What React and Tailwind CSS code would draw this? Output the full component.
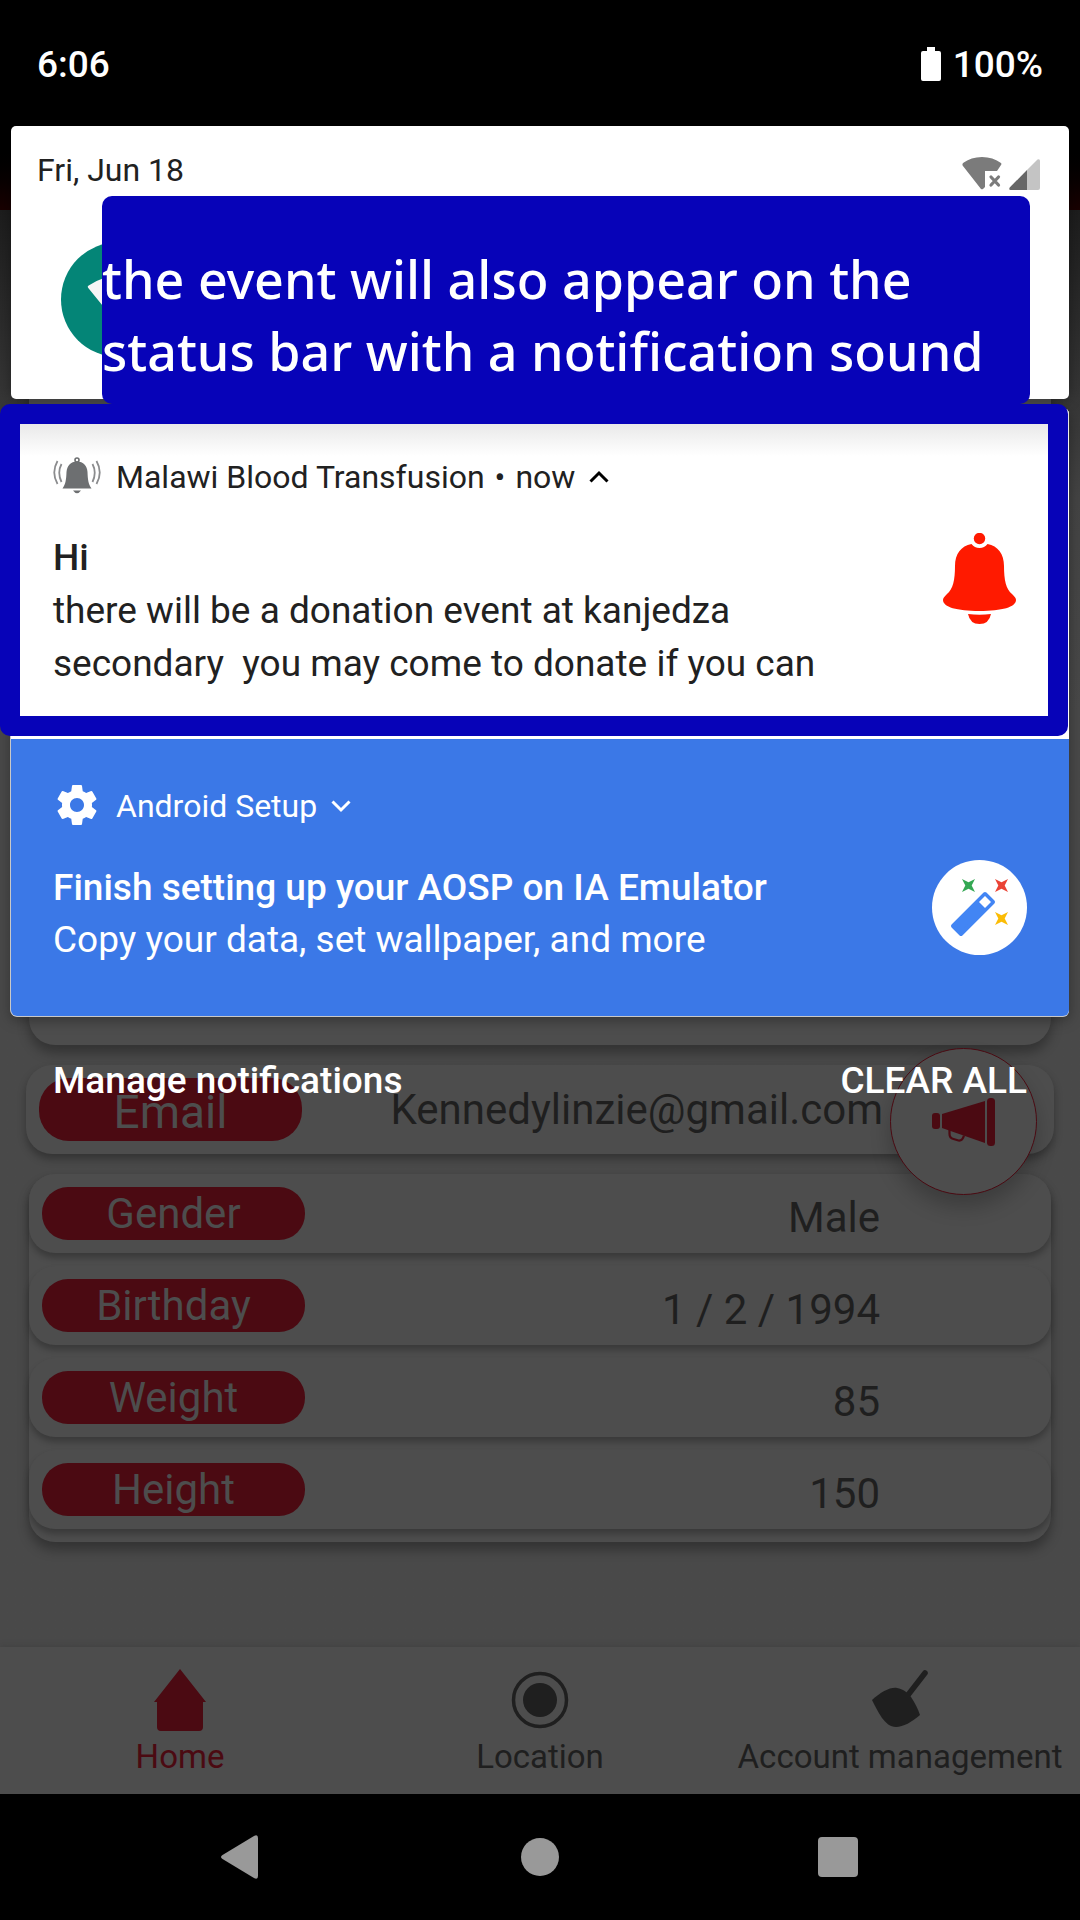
import React from "react";

const details = [
  { label: "Gender", value: "Male" },
  { label: "Birthday", value: "1 / 2 / 1994" },
  { label: "Weight", value: "85" },
  { label: "Height", value: "150" },
];

function HomeIcon() {
  return (
    <svg width="52" height="62" viewBox="0 0 52 62" fill="currentColor" aria-hidden="true">
      <path d="M26 0 52 33h-3v25q0 4-4 4H7q-4 0-4-4V33H0z" />
    </svg>
  );
}

function LocationIcon() {
  return (
    <svg width="58" height="62" viewBox="0 0 58 62" aria-hidden="true">
      <circle cx="29" cy="31" r="26.5" fill="none" stroke="currentColor" strokeWidth="3.5" />
      <circle cx="29" cy="31" r="17" fill="currentColor" />
    </svg>
  );
}

function TrowelIcon() {
  return (
    <svg width="56" height="62" viewBox="0 0 56 62" aria-hidden="true">
      <path d="M53 4 36 26" stroke="currentColor" strokeWidth="5.5" strokeLinecap="round" />
      <path
        d="M0 31C9 23 18 18 25 19c6 1 10 4 14 9 4 6 7 12 9 18-8 7-17 12-24 12-6 0-10-4-14-9C6 43 3 37 0 31z"
        fill="currentColor"
      />
    </svg>
  );
}

function MegaphoneIcon() {
  return (
    <svg width="64" height="48" viewBox="0 0 64 48" fill="currentColor" aria-hidden="true">
      <rect x="0" y="15" width="8" height="16" rx="3" />
      <path d="M10 16 53 3v42L10 30z" />
      <rect x="55" y="0" width="8" height="48" rx="3.5" />
      <path d="M17.500 32v4q0 4 4 5l5 1.500q4 .5 5.500-5" fill="none" stroke="currentColor" strokeWidth="2.2" />
    </svg>
  );
}

function WifiOffIcon() {
  return (
    <svg width="41" height="33" viewBox="0 0 41 33" aria-hidden="true">
      <path
        d="M1 6Q9 0 20 0t19 6q1 1 0 2l-4 6H23v16l-2 2q-1 .7-2 0L.6 8.500Q0 7 1 6z"
        fill="#7b7b7b"
      />
      <path d="m29 20 7.500 8m0-8L29 28" stroke="#7b7b7b" strokeWidth="3.2" strokeLinecap="round" />
    </svg>
  );
}

function SignalIcon() {
  return (
    <svg width="31" height="31" viewBox="0 0 31 31" aria-hidden="true">
      <path d="M18 11 28.500.6Q31-.5 31 2v27q0 2-2 2H18z" fill="#c4c4c4" />
      <path d="M18 11v20H1.500Q-.5 31 .7 28.500z" fill="#666" />
    </svg>
  );
}

function RingingBellIcon() {
  return (
    <svg className="mb-1" width="48" height="37" viewBox="0 0 48 37" aria-hidden="true">
      <circle cx="24" cy="3" r="2" fill="none" stroke="#6d6f71" strokeWidth="1.600" />
      <path d="M24 4.500c6.500 0 10 4.500 10.500 10.500.3 7 .7 12 4 16.500H9.500c3.300-4.500 3.700-9.500 4-16.500C14 9 17.500 4.500 24 4.500z" fill="#6d6f71" />
      <path d="M20 33.500h8q-4 5.500-8 0z" fill="#6d6f71" />
      <path
        d="M8.500 7Q4 15.500 8.500 25M4.500 4Q-2 15.500 4.500 27M39.500 7Q44 15.500 39.500 25M43.500 4Q50 15.500 43.500 27"
        fill="none"
        stroke="#8b8c8e"
        strokeWidth="1.800"
      />
    </svg>
  );
}

function GearIcon() {
  return (
    <svg className="mb-0.5" width="48" height="48" viewBox="0 0 24 24" fill="#fff" aria-hidden="true">
      <path d="M19.430 12.980c.04-.32.07-.64.07-.98s-.03-.66-.07-.98l2.110-1.650c.19-.15.24-.42.12-.64l-2-3.460c-.12-.22-.39-.3-.61-.22l-2.490 1c-.52-.4-1.080-.73-1.690-.98l-.38-2.650C14.460 2.180 14.250 2 14 2h-4c-.25 0-.46.18-.49.42l-.38 2.650c-.61.25-1.170.59-1.690.98l-2.490-1c-.23-.09-.49 0-.61.22l-2 3.460c-.13.22-.07.49.12.64l2.110 1.650c-.04.32-.07.65-.07.98s.03.66.07.98l-2.110 1.650c-.19.15-.24.42-.12.64l2 3.460c.12.22.39.3.61.22l2.490-1c.52.4 1.080.73 1.690.98l.38 2.650c.03.24.24.42.49.42h4c.25 0 .46-.18.49-.42l.38-2.650c.61-.25 1.170-.59 1.690-.98l2.490 1c.23.09.49 0 .61-.22l2-3.460c.12-.22.07-.49-.12-.64l-2.110-1.650zM12 15.500c-1.930 0-3.500-1.570-3.500-3.500s1.570-3.500 3.500-3.500 3.500 1.570 3.500 3.500-1.570 3.500-3.500 3.500z" />
    </svg>
  );
}

function RedBellIcon() {
  return (
    <svg className="mt-px shrink-0" width="95" height="92" viewBox="0 0 95 92" fill="#ff1a00" aria-hidden="true">
      <circle cx="47.500" cy="5.500" r="5.700" />
      <path d="M39.500 11q3 4 8 4t8-4C66 13 72 21 72 33c0 14 2 23 8 28 3 3 4 4 4 6 0 7-14 11-36.500 11S11 74 11 67c0-2 1-3 4-6 6-5 8-14 8-28 0-12 6-20 16.500-22z" />
      <path d="M36 81q11.500 1.500 23 0-2 10-11.500 10T36 81z" />
    </svg>
  );
}

const star = "M-6.500-6.500 0-3.200 6.500-6.500 3.200 0 6.500 6.500 0 3.200-6.500 6.500-3.200 0z";

function WandIcon() {
  return (
    <svg className="-mt-0.5 shrink-0" width="95" height="95" viewBox="0 0 95 95" aria-hidden="true">
      <circle cx="47.500" cy="47.500" r="47.500" fill="#fff" />
      <path d={star} transform="translate(36.500 25.500)" fill="#34a853" />
      <path d={star} transform="translate(69.500 25.500)" fill="#ea4335" />
      <path d={star} transform="translate(69.500 58.500)" fill="#fbbc05" />
      <path
        d="M21 66 53 34l8 8-32 32-8-8z"
        fill="#4285f4"
        stroke="#4285f4"
        strokeWidth="4"
        strokeLinejoin="round"
      />
      <path d="m53 36 6 6-6 6-6-6z" fill="#fff" />
    </svg>
  );
}

function Chevron({ up }) {
  return (
    <svg width="20" height="14" viewBox="0 0 20 14" fill="none" stroke={up ? "#000" : "#fff"} strokeWidth="3" aria-hidden="true">
      <path d={up ? "M1.500 11.500 10 3l8.500 8.500" : "M1.500 2.500 10 11l8.500-8.500"} />
    </svg>
  );
}

function Pill({ children, large }) {
  return (
    <span
      className={
        large
          ? "flex h-[63px] w-[263px] items-center justify-center rounded-[30px] bg-[#4b0a12] pt-1 text-[46px] leading-none text-[#4d4d4d]"
          : "flex h-[53px] w-[263px] items-center justify-center rounded-[26px] bg-[#4b0a12] text-[42px] leading-none text-[#4d4d4d]"
      }
    >
      {children}
    </span>
  );
}

function NavItem({ icon, label, active }) {
  return (
    <a
      href="#"
      className={
        active
          ? "flex flex-col items-center gap-1.5 text-[#4b0a12]"
          : "flex flex-col items-center gap-1.5 text-[#1f1f1f]"
      }
    >
      {icon}
      <span className="text-[33px] leading-10 whitespace-nowrap">{label}</span>
    </a>
  );
}

function AppScreen() {
  return (
    <div className="flex min-h-screen flex-col bg-black">
      <header className="h-[210px] bg-linear-to-b from-black from-60% to-[#190000]" />
      <main className="relative flex-1 bg-linear-to-b from-[#1d1d1d] via-[#444] via-20% to-[#494949] to-35%">
        <section className="mx-[29px] mt-10 h-[795px] rounded-[26px] bg-[#4d4d4d] shadow-[0_8px_12px_rgba(0,0,0,0.3)]" />

        <dl className="mt-5">
          <div className="mx-[26px] flex h-[89px] items-center justify-between rounded-[26px] bg-[#4d4d4d] pr-[171px] pl-[13px] shadow-[0_5px_8px_rgba(0,0,0,0.3)]">
            <dt>
              <Pill large>Email</Pill>
            </dt>
            <dd className="text-[42px] leading-none text-[#1f1f1f]">Kennedylinzie@gmail.com</dd>
          </div>

          <div className="mx-[29px] mt-5 flex flex-col gap-[13px] rounded-[26px] bg-[#4d4d4d] pb-[13px] shadow-[0_8px_12px_rgba(0,0,0,0.3)]">
            {details.map((d) => (
              <div
                key={d.label}
                className="flex h-[79px] items-center justify-between rounded-[26px] bg-[#4d4d4d] pr-[171px] pl-[13px] shadow-[0_5px_6px_rgba(0,0,0,0.25)]"
              >
                <dt>
                  <Pill>{d.label}</Pill>
                </dt>
                <dd className="pt-2 text-[42px] leading-none text-[#1f1f1f]">{d.value}</dd>
              </div>
            ))}
          </div>
        </dl>

        <button
          type="button"
          aria-label="Announcements"
          className="absolute top-[838px] right-[43px] flex size-[147px] items-center justify-center rounded-full border border-[#4b0a12] bg-[#4d4d4d] text-[#4b0a12] shadow-[0_12px_20px_rgba(0,0,0,0.22)]"
        >
          <MegaphoneIcon />
        </button>
      </main>

      <nav className="relative grid h-[147px] grid-cols-3 bg-[#4d4d4d] pt-[22px] shadow-[0_0_8px_rgba(0,0,0,0.15)]">
        <NavItem icon={<HomeIcon />} label="Home" active />
        <NavItem icon={<LocationIcon />} label="Location" />
        <NavItem icon={<TrowelIcon />} label="Account management" />
      </nav>

      <div className="relative grid h-[126px] grid-cols-3 items-center justify-items-center bg-black px-[90px]">
        <button type="button" aria-label="Back">
          <svg width="38" height="44" viewBox="0 0 38 44" fill="#999" aria-hidden="true">
            <path d="M1.500 20 33 1q4-2 4 2v38q0 4-4 2L1.500 24q-3-2 0-4z" />
          </svg>
        </button>
        <button type="button" aria-label="Home" className="size-[38px] rounded-full bg-[#999]" />
        <button type="button" aria-label="Recent apps" className="mr-1 size-10 rounded-sm bg-[#999]" />
      </div>
    </div>
  );
}

function NotificationShade() {
  return (
    <div className="absolute inset-x-0 top-0">
      <div className="flex h-[126px] items-center justify-between px-[37px] pt-[3px] text-[37px] font-medium text-white">
        <span>6:06</span>
        <span className="flex items-center gap-3">
          <svg className="mb-0.5" width="20" height="34" viewBox="0 0 20 34" fill="#fff" aria-hidden="true">
            <path d="M6 0h8v4h4q2 0 2 2v26q0 2-2 2H2q-2 0-2-2V6q0-2 2-2h4z" />
          </svg>
          100%
        </span>
      </div>

      <section className="relative mx-[11px] h-[273px] rounded-[5px] bg-white shadow-[0_0_14px_rgba(0,0,0,0.35)]">
        <div className="flex h-[88px] items-center justify-between pr-[29px] pl-[26px]">
          <span className="text-[32px] text-[#212121]">Fri, Jun 18</span>
          <span className="flex items-end gap-1.5 pt-1.5">
            <WifiOffIcon />
            <SignalIcon />
          </span>
        </div>
        <button
          type="button"
          aria-label="Wi-Fi"
          className="mt-[28px] ml-[50px] flex size-[115px] items-center justify-center rounded-full bg-[#048577]"
        >
          <svg width="63" height="63" viewBox="0 0 24 24" fill="#f5f5f5" stroke="#f5f5f5" strokeLinejoin="round" aria-hidden="true">
            <path d="M12 21 23.200 7.200C22.500 6.700 18.500 3.500 12 3.500S1.500 6.700.8 7.200z" />
          </svg>
        </button>
        <p className="absolute top-[70px] right-[39px] left-[91px] h-[208px] rounded-[10px] bg-[#0703b8] pt-[47px] font-['Noto_Sans','Open_Sans',sans-serif] text-[52px] leading-[72px] font-medium whitespace-pre text-white">
          {"the event will also appear on the\nstatus bar with a notification sound"}
        </p>
      </section>

      <div className="mx-[11px] mt-[9px] rounded-[6px] bg-white shadow-[0_1px_0_#c8c8c8,-1px_0_0_#c8c8c8,0_4px_14px_rgba(0,0,0,0.35)]">
        <article className="relative rounded-t-[6px] bg-white pb-[49px]">
          <div className="h-12 rounded-t-[6px] bg-linear-to-b from-[#dedede] to-white" />
          <button
            type="button"
            aria-expanded="true"
            className="-mt-[11px] flex h-16 items-center pl-[42px] text-[32px] text-[#212121]"
          >
            <RingingBellIcon />
            <span className="ml-[15px]">Malawi Blood Transfusion</span>
            <span className="mx-2.5">•</span>
            <span className="mr-3.5">now</span>
            <Chevron up />
          </button>
          <div className="mt-[23px] flex items-start justify-between px-[42px] text-[37px] leading-[52px] text-[#212121]">
            <div>
              <h2 className="font-medium">Hi</h2>
              <p className="leading-[53px] whitespace-pre">
                {"there will be a donation event at kanjedza\nsecondary  you may come to donate if you can"}
              </p>
            </div>
            <RedBellIcon />
          </div>
          <div className="pointer-events-none absolute -top-1 right-px bottom-[3px] -left-[11px] rounded-[10px] border-20 border-[#0703b8]" />
        </article>

        <article className="rounded-b-[6px] bg-[#3b78e7] pt-[35px] pb-[50px] text-white">
          <button type="button" aria-expanded="false" className="flex h-16 items-center pl-[42px] text-[32px]">
            <GearIcon />
            <span className="mr-3.5 ml-[15px]">Android Setup</span>
            <Chevron />
          </button>
          <div className="mt-6 flex items-start justify-between px-[42px] text-[37px] leading-[52px]">
            <div className="h-[104px]">
              <h2 className="font-medium">Finish setting up your AOSP on IA Emulator</h2>
              <p>Copy your data, set wallpaper, and more</p>
            </div>
            <WandIcon />
          </div>
        </article>
      </div>

      <div className="mt-[39px] flex justify-between px-[53px] text-[37px] leading-[52px] font-medium text-white">
        <button type="button">Manage notifications</button>
        <button type="button">CLEAR ALL</button>
      </div>
    </div>
  );
}

export default function App() {
  return (
    <div className="relative font-[Roboto,sans-serif]">
      <AppScreen />
      <NotificationShade />
    </div>
  );
}
